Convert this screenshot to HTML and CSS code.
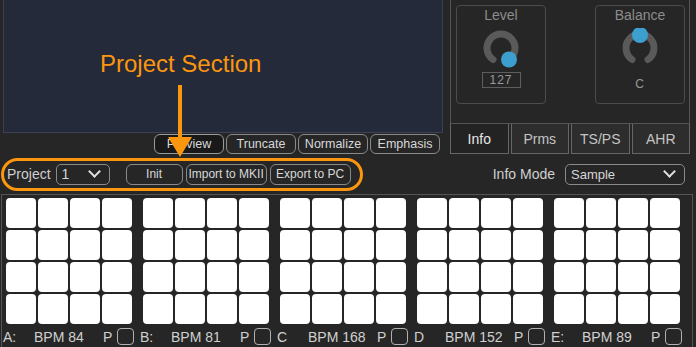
FILE: index.html
```html
<!DOCTYPE html>
<html lang="en">
<head>
    <meta charset="UTF-8">
    <title>Project Section</title>
    <link rel="stylesheet" href="styles.css">
</head>
<body>
<div class="app">

    <div class="top">
        <div class="left-col">
            <div class="wave"></div>
            <div class="wave-buttons">
                <button class="btn selected">Preview</button>
                <button class="btn">Truncate</button>
                <button class="btn">Normalize</button>
                <button class="btn">Emphasis</button>
            </div>
        </div>

        <div class="right-col">
            <div class="knobs">
                <div class="knob-box">
                    <div class="knob-label">Level</div>
                    <svg class="knob" width="40" height="40" viewBox="0 0 40 40">
                        <path d="M12 31.5 A14 14 0 1 1 28 31.5" fill="none" stroke="#5a5a5a" stroke-width="7" stroke-linecap="round"/>
                        <circle cx="28" cy="31.5" r="8" fill="#3d9fcf"/>
                    </svg>
                    <div class="knob-value boxed">127</div>
                </div>
                <div class="knob-box">
                    <div class="knob-label">Balance</div>
                    <svg class="knob" width="40" height="40" viewBox="0 0 40 40">
                        <path d="M12 31.5 A14 14 0 1 1 28 31.5" fill="none" stroke="#5a5a5a" stroke-width="7" stroke-linecap="round"/>
                        <circle cx="20" cy="7" r="8" fill="#3d9fcf"/>
                    </svg>
                    <div class="knob-value">C</div>
                </div>
            </div>
            <div class="tabs">
                <div class="tab active">Info</div>
                <div class="tab">Prms</div>
                <div class="tab">TS/PS</div>
                <div class="tab">AHR</div>
            </div>
        </div>
    </div>

    <div class="project-row">
        <div class="project-section">
            <span class="field-label">Project</span>
            <div class="select small">1 <span class="chev"></span></div>
            <button class="btn init">Init</button>
            <button class="btn import">Import to MKII</button>
            <button class="btn export">Export to PC</button>
        </div>
        <div class="info-mode">
            <span class="field-label">Info Mode</span>
            <div class="select wide">Sample <span class="chev"></span></div>
        </div>
    </div>

    <div class="pads-area">
        <div class="pad-groups" id="groups"></div>
    </div>

    <div class="annotation">
        <div class="note">Project Section</div>
        <div class="arrow-line"></div>
        <div class="arrow-head"></div>
    </div>
</div>

<script>
    // five pad banks, 16 pads each
    const banks = [
        { name: "A:", bpm: 84 },
        { name: "B:", bpm: 81 },
        { name: "C", bpm: 168 },
        { name: "D", bpm: 152 },
        { name: "E:", bpm: 89 }
    ];
    const groups = document.getElementById("groups");
    banks.forEach(b => {
        let g = document.createElement("div");
        g.className = "bank";
        let grid = "<div class='pads'>";
        for (let i = 0; i < 16; i++) grid += "<div class='pad'></div>";
        grid += "</div>";
        g.innerHTML = grid +
            "<div class='bank-info'><span class='bank-name'>" + b.name + "</span>" +
            "<span class='bpm'>BPM " + b.bpm + "</span>" +
            "<span class='p'>P</span><span class='check'></span></div>";
        groups.appendChild(g);
    });
</script>
</body>
</html>
```

FILE: styles.css
```css
body {
    margin: 0;
    background: #262626;
    font-family: "Liberation Sans", Arial, sans-serif;
    color: #d2d2d2;
}
.app {
    position: relative;
    width: 696px;
    height: 347px;
    overflow: hidden;
}

/* top part */
.top {
    display: flex;
    height: 154px;
}
.left-col {
    margin-left: 3px;
    width: 440px;
}
.wave {
    background: #252a3a;
    border: 1px solid #3c4152;
    border-top: none;
    box-sizing: border-box;
    height: 133px;
}
.wave-buttons {
    display: flex;
    justify-content: flex-end;
    gap: 2px;
    margin-top: 1px;
    padding-right: 3px;
}
.btn {
    height: 20px;
    padding: 0;
    background: #262626;
    border: 1px solid #8a8a8a;
    border-radius: 6px;
    color: #d8d8d8;
    font-family: "Liberation Sans", Arial, sans-serif;
    font-size: 12px;
}
.wave-buttons .btn {
    width: 70px;
    font-size: 12.5px;
}
.btn.selected {
    background: #191919;
    border-color: #9a9a9a;
}

.right-col {
    margin-left: 7px;
    width: 240px;
}
.knobs {
    display: flex;
    justify-content: space-between;
    height: 124px;
    padding: 5px 4px 0 5px;
    border: 1px solid #555;
    border-top: none;
    box-sizing: border-box;
}
.knob-box {
    width: 90px;
    height: 99px;
    border: 1px solid #4c4c4c;
    border-radius: 4px;
    box-sizing: border-box;
    display: flex;
    flex-direction: column;
    align-items: center;
}
.knob-label {
    font-size: 14px;
    color: #8c8c8c;
    margin-top: 1px;
    height: 16px;
}
.knob {
    margin-top: 5px;
}
.knob-value {
    margin-top: 4px;
    width: 39px;
    height: 16px;
    box-sizing: border-box;
    font-size: 12px;
    color: #9a9a9a;
    text-align: center;
    line-height: 14px;
    letter-spacing: 1px;
}
.knob-value.boxed {
    border: 1px solid #5e5e5e;
}
.knob-value:not(.boxed) {
    margin-top: 9px;
}
.tabs {
    display: flex;
    gap: 2px;
    height: 30px;
}
.tab {
    flex: 1;
    border: 1px solid #666;
    border-top: none;
    background: #2d2d2d;
    color: #c4c4c4;
    font-size: 14px;
    display: flex;
    align-items: center;
    justify-content: center;
}
.tab.active {
    background: #232323;
    color: #e6e6e6;
}

/* project row */
.project-row {
    display: flex;
    justify-content: space-between;
    align-items: center;
    margin-top: 3px;
    height: 34px;
}
.project-section {
    display: flex;
    align-items: center;
    margin-left: 1px;
    width: 362px;
    height: 33px;
    box-sizing: border-box;
    border: 3px solid #fb960f;
    border-radius: 17px;
    padding-left: 3px;
}
.field-label {
    font-size: 14px;
    color: #cfcfcf;
}
.select {
    display: flex;
    align-items: center;
    justify-content: space-between;
    height: 21px;
    box-sizing: border-box;
    border: 1px solid #8a8a8a;
    border-radius: 5px;
    padding: 0 10px 0 5px;
    font-size: 14px;
    color: #d8d8d8;
}
.select.small {
    width: 54px;
    margin-left: 5px;
}
.select.wide {
    width: 120px;
    margin-left: 10px;
    font-size: 13px;
}
.chev {
    width: 7px;
    height: 7px;
    border-right: 2px solid #e0e0e0;
    border-bottom: 2px solid #e0e0e0;
    transform: rotate(45deg);
    margin-top: -5px;
}
.project-section .btn {
    height: 21px;
    margin-right: 3px;
}
.init {
    width: 57px;
    margin-left: 16px;
}
.import {
    width: 81px;
}
.export {
    width: 81px;
}
.info-mode {
    display: flex;
    align-items: center;
    margin-right: 11px;
}

/* pads */
.pads-area {
    margin-top: 3px;
    margin-left: 1px;
    width: 692px;
    height: 160px;
    border: 1px solid #555;
    border-bottom: none;
    box-sizing: border-box;
}
.pad-groups {
    display: flex;
    gap: 11px;
    padding: 3px 0 0 4px;
}
.bank {
    width: 126px;
}
.pads {
    display: grid;
    grid-template-columns: repeat(4, 30px);
    grid-auto-rows: 30px;
    gap: 2px;
}
.pad {
    background: #fff;
    border-radius: 4px;
}
.bank-info {
    position: relative;
    height: 22px;
    margin-top: 3px;
    font-size: 14px;
    color: #d0d0d0;
}
.bank-name {
    position: absolute;
    left: -3px;
    top: 2px;
}
.bpm {
    position: absolute;
    left: 28px;
    top: 2px;
}
.p {
    position: absolute;
    left: 97px;
    top: 2px;
}
.check {
    position: absolute;
    left: 111px;
    top: 1px;
    width: 17px;
    height: 17px;
    box-sizing: border-box;
    border: 1px solid #b0b0b0;
    border-radius: 4px;
}

/* annotation overlay */
.annotation {
    position: absolute;
    left: 0;
    top: 0;
}
.note {
    position: absolute;
    left: 100px;
    top: 50px;
    white-space: nowrap;
    font-size: 24px;
    color: #fb960f;
}
.arrow-line {
    position: absolute;
    left: 178px;
    top: 85px;
    width: 4px;
    height: 56px;
    background: #fb960f;
}
.arrow-head {
    position: absolute;
    left: 168px;
    top: 137px;
    width: 0;
    height: 0;
    border-left: 12px solid transparent;
    border-right: 12px solid transparent;
    border-top: 20px solid #fb960f;
}
```
